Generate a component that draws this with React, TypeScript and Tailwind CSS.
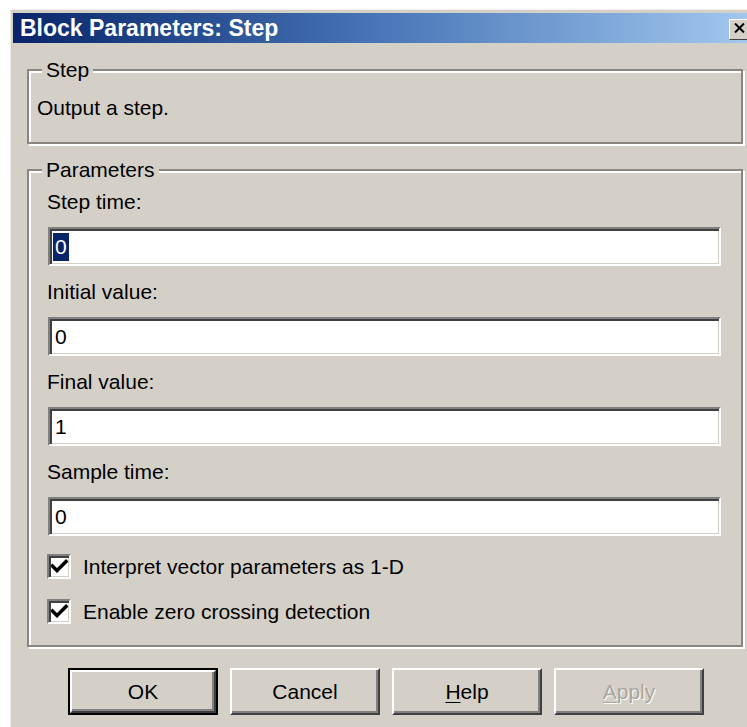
import React from "react";

const sunken =
  "border-t-2 border-l-2 border-b-2 border-r-2 border-t-[#808080] border-l-[#808080] border-b-white border-r-white shadow-[inset_2px_2px_0_#404040,inset_-1px_-1px_0_#d4d0c8]";

const etched =
  "border-2 border-[#8a8781] shadow-[inset_2px_2px_0_#ffffff,2px_2px_0_#ffffff]";

function Field({
  label,
  value,
  selected = false,
}: {
  label: string;
  value: string;
  selected?: boolean;
}) {
  return (
    <div className="flex flex-col">
      <div className="h-[24px] leading-[24px] text-[21px] text-black">{label}</div>
      <div
        className={`mt-[13px] ml-px h-[39px] bg-white ${sunken} flex items-center pl-[3px]`}
      >
        {selected ? (
          <span className="bg-[#0a246a] text-white text-[21px] leading-[28px] px-[2px]">
            {value}
          </span>
        ) : (
          <span className="text-black text-[21px] leading-[28px] pl-[2px]">{value}</span>
        )}
      </div>
    </div>
  );
}

function CheckRow({ label }: { label: string }) {
  return (
    <div className="flex items-center h-[25px]">
      <div className={`w-[24px] h-[25px] bg-white ${sunken} flex items-center justify-center`}>
        <svg width="17" height="15" viewBox="0 0 17 15">
          <path
            d="M1.5 7 L6 11.5 L15 2.5"
            fill="none"
            stroke="#000"
            strokeWidth="3.4"
            strokeLinecap="square"
          />
        </svg>
      </div>
      <span className="ml-[12px] text-[21px] leading-[24px] text-black">{label}</span>
    </div>
  );
}

function Button({
  children,
  isDefault = false,
  disabled = false,
}: {
  children: React.ReactNode;
  isDefault?: boolean;
  disabled?: boolean;
}) {
  const face = (
    <div className="flex-1 flex items-center justify-center bg-[#d4d0c8] border-2 border-t-white border-l-white border-b-[#404040] border-r-[#404040] shadow-[inset_-2px_-2px_0_#808080]">
      <span
        className={`text-[21px] leading-[24px] ${
          disabled ? "text-[#a8a5a0] [text-shadow:1px_1px_0_#ffffff]" : "text-black"
        }`}
      >
        {children}
      </span>
    </div>
  );
  return (
    <div
      className={`w-[150px] h-[47px] flex ${
        isDefault ? "border-2 border-black" : ""
      }`}
    >
      {face}
    </div>
  );
}

export default function App() {
  return (
    <div
      className="w-[747px] h-[727px] overflow-hidden bg-white"
      style={{ fontFamily: '"Liberation Sans", Arial, sans-serif' }}
    >
      <div className="ml-[10px] mt-[9px] w-[752px] h-[740px] bg-[#d4d0c8] border-l border-t border-[#f2f0ea] pl-[2px] pt-[3px]">
        {/* caption bar */}
        <div className="h-[30px] w-[748px] flex items-center bg-gradient-to-r from-[#0a246a] via-[#4a78b8] to-[#a6caf0]">
          <span className="pl-[7px] text-white font-bold text-[23px] leading-[30px]">
            Block Parameters: Step
          </span>
          <div className="flex-1" />
          <div className="mr-[12px] mt-[3px] w-[20px] h-[21px] bg-[#d4d0c8] border border-t-white border-l-white border-b-[#404040] border-r-[#404040] flex items-start justify-center pt-[3px]">
            <svg width="11" height="10" viewBox="0 0 11 10">
              <path d="M1 0.5 L10 9.5 M10 0.5 L1 9.5" stroke="#000" strokeWidth="2" />
            </svg>
          </div>
        </div>

        {/* dialog body */}
        <div className="ml-[14px] w-[716px] flex flex-col">
          {/* Step group */}
          <div className={`relative mt-[26px] h-[75px] ${etched}`}>
            <span className="absolute left-[13px] top-[-13px] px-[4px] bg-[#d4d0c8] text-[21px] leading-[24px] text-black">
              Step
            </span>
            <div className="pl-[8px] pt-[25px] text-[21px] leading-[24px] text-black">
              Output a step.
            </div>
          </div>

          {/* Parameters group */}
          <div className={`relative mt-[25px] h-[478px] ${etched} pl-[18px] pr-[20px] pt-[19px]`}>
            <span className="absolute left-[13px] top-[-13px] px-[4px] bg-[#d4d0c8] text-[21px] leading-[24px] text-black">
              Parameters
            </span>
            <div className="flex flex-col gap-[14px]">
              <Field label="Step time:" value="0" selected />
              <Field label="Initial value:" value="0" />
              <Field label="Final value:" value="1" />
              <Field label="Sample time:" value="0" />
            </div>
            <div className="mt-[18px] flex flex-col gap-[20px]">
              <CheckRow label="Interpret vector parameters as 1-D" />
              <CheckRow label="Enable zero crossing detection" />
            </div>
          </div>

          {/* buttons */}
          <div className="mt-[21px] ml-[41px] flex gap-[12px]">
            <Button isDefault>OK</Button>
            <Button>Cancel</Button>
            <Button>
              <span className="underline underline-offset-[3px] decoration-1">H</span>elp
            </Button>
            <Button disabled>
              <span className="underline underline-offset-[3px] decoration-1">A</span>pply
            </Button>
          </div>
        </div>
      </div>
    </div>
  );
}
